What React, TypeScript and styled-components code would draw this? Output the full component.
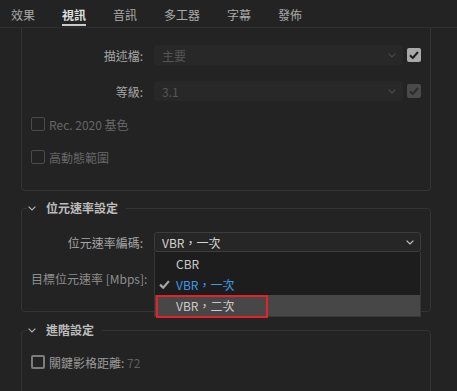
import React from "react";
import styled, { createGlobalStyle } from "styled-components";

const GlobalStyle = createGlobalStyle`
  html, body {
    margin: 0;
    padding: 0;
    height: 391px;
    overflow: hidden;
    background: #232323;
  }
  body {
    font-family: "Noto Sans CJK TC", "Noto Sans", sans-serif;
    font-size: 12px;
    color: #a8a8a8;
  }
`;

const tabs = ["效果", "視訊", "音訊", "多工器", "字幕", "發佈"];

function Chevron({ color }: { color: string }) {
  return (
    <svg width="8" height="5" viewBox="0 0 8 5">
      <polyline points="0.6,0.6 4,4 7.4,0.6" fill="none" stroke={color} strokeWidth="1.2" />
    </svg>
  );
}

function Tick({ color, size = 10 }: { color: string; size?: number }) {
  return (
    <svg width={size} height={size * 0.8} viewBox="0 0 10 8">
      <polyline points="1,4.2 3.8,7 9,1" fill="none" stroke={color} strokeWidth="2" />
    </svg>
  );
}

function App() {
  return (
    <>
      <GlobalStyle />
      <TabBar>
        {tabs.map((t) => (
          <Tab key={t} $active={t === "視訊"}>
            {t}
          </Tab>
        ))}
      </TabBar>

      <Content>
        <TopBox>
          <SelectStack>
            <FormRow>
              <Label>描述檔:</Label>
              <Select $disabled>
                <span>主要</span>
                <Chevron color="#4a4a4a" />
              </Select>
              <CheckBox $checked $tone="bright">
                <Tick color="#1f1f1f" />
              </CheckBox>
            </FormRow>
            <FormRow>
              <Label>等級:</Label>
              <Select $disabled>
                <span>3.1</span>
                <Chevron color="#4a4a4a" />
              </Select>
              <CheckBox $checked $tone="dim">
                <Tick color="#2b2b2b" />
              </CheckBox>
            </FormRow>
          </SelectStack>
          <CheckRow>
            <CheckBox />
            <CheckLabel>Rec. 2020 基色</CheckLabel>
          </CheckRow>
          <CheckRow>
            <CheckBox />
            <CheckLabel>高動態範圍</CheckLabel>
          </CheckRow>
        </TopBox>

        <Section>
          <Legend>
            <Chevron color="#b0b0b0" />
            <LegendText>位元速率設定</LegendText>
          </Legend>
          <SectionBody>
            <FormRow>
              <Label>位元速率編碼:</Label>
              <SelectWrap>
                <Select $open>
                  <span>VBR，一次</span>
                  <Chevron color="#c4c4c4" />
                </Select>
                <Menu>
                  <MenuItem>
                    <TickSlot />
                    CBR
                  </MenuItem>
                  <MenuItem $selected>
                    <TickSlot>
                      <Tick color="#a8a8a8" size={11} />
                    </TickSlot>
                    VBR，一次
                  </MenuItem>
                  <MenuItem $hover>
                    <TickSlot />
                    VBR，二次
                    <Annotation />
                  </MenuItem>
                </Menu>
              </SelectWrap>
            </FormRow>
            <FormRow>
              <Label $dim>目標位元速率 [Mbps]:</Label>
            </FormRow>
          </SectionBody>
        </Section>

        <Section $last>
          <Legend>
            <Chevron color="#b0b0b0" />
            <LegendText>進階設定</LegendText>
          </Legend>
          <SectionBody $last>
            <CheckRow>
              <CheckBox $tone="strong" />
              <CheckLabel $bright>
                關鍵影格距離: <Value>72</Value>
              </CheckLabel>
            </CheckRow>
          </SectionBody>
        </Section>
      </Content>
    </>
  );
}

const TabBar = styled.div`
  display: flex;
  align-items: flex-start;
  gap: 27px;
  height: 27px;
  padding-left: 11px;
  border-bottom: 1px solid #2e2e2e;
`;

const Tab = styled.div<{ $active?: boolean }>`
  box-sizing: border-box;
  height: 26px;
  padding-top: 5px;
  display: flex;
  align-items: center;
  font-size: 12px;
  color: ${(p) => (p.$active ? "#e0e0e0" : "#a9a9a9")};
  font-weight: ${(p) => (p.$active ? 700 : 400)};
  border-bottom: 2px solid ${(p) => (p.$active ? "#c9c9c9" : "transparent")};
`;

const Content = styled.div`
  padding: 0 26px 0 21px;
`;

const TopBox = styled.div`
  display: flex;
  flex-direction: column;
  gap: 13px;
  padding: 17px 9px 23px;
  border: 1px solid #343434;
  border-top: none;
  border-radius: 0 0 4px 4px;
`;

const SelectStack = styled.div`
  display: flex;
  flex-direction: column;
  gap: 16px;
`;

const FormRow = styled.div`
  display: flex;
  align-items: center;
  height: 20px;
`;

const Label = styled.div<{ $dim?: boolean }>`
  width: 112px;
  margin-right: 11px;
  text-align: right;
  white-space: nowrap;
  color: ${(p) => (p.$dim ? "#8e8e8e" : "#a6a6a6")};
`;

const SelectWrap = styled.div`
  position: relative;
  flex: 1;
  height: 20px;
`;

const Select = styled.div<{ $disabled?: boolean; $open?: boolean }>`
  box-sizing: border-box;
  flex: 1;
  height: 20px;
  display: flex;
  align-items: center;
  justify-content: space-between;
  padding: 0 6px 0 7px;
  border-radius: 3px;
  background: ${(p) => (p.$disabled ? "#282828" : "#262626")};
  border: 1px solid ${(p) => (p.$open ? "#3c3c3c" : "transparent")};
  color: ${(p) => (p.$disabled ? "#565656" : "#d4d4d4")};
`;

const CheckBox = styled.div<{ $checked?: boolean; $tone?: "bright" | "dim" | "strong" }>`
  box-sizing: border-box;
  width: 14px;
  height: 14px;
  flex-shrink: 0;
  margin-left: 4px;
  border-radius: 2px;
  display: flex;
  align-items: center;
  justify-content: center;
  background: ${(p) =>
    p.$checked ? (p.$tone === "bright" ? "#a9a9a9" : "#4a4a4a") : "transparent"};
  border: ${(p) =>
    p.$checked
      ? "none"
      : p.$tone === "strong"
      ? "2px solid #7c7c7c"
      : "1.5px solid #4c4c4c"};
`;

const CheckRow = styled.div`
  display: flex;
  align-items: center;
  height: 20px;
  gap: 4px;
  & > ${CheckBox} {
    margin-left: 0;
  }
`;

const CheckLabel = styled.span<{ $bright?: boolean }>`
  color: ${(p) => (p.$bright ? "#9a9a9a" : "#676767")};
  white-space: nowrap;
`;

const Value = styled.span`
  color: #5e5e5e;
`;

const Section = styled.fieldset<{ $last?: boolean }>`
  margin: ${(p) => (p.$last ? "10px" : "9px")} 0 0;
  padding: 0 9px;
  min-width: 0;
  border: 1px solid #343434;
  border-radius: 4px;
`;

const Legend = styled.legend`
  display: flex;
  align-items: center;
  gap: 10px;
  height: 16px;
  margin-left: -4px;
  padding: 0 8px 0 1px;
`;

const LegendText = styled.span`
  font-weight: 700;
  color: #bdbdbd;
  line-height: 16px;
`;

const SectionBody = styled.div<{ $last?: boolean }>`
  display: flex;
  flex-direction: column;
  gap: 16px;
  padding: ${(p) => (p.$last ? "14px 0 24px" : "16px 0 23px")};
`;

const Menu = styled.div`
  position: absolute;
  z-index: 2;
  top: 20px;
  left: 0;
  right: 0;
  padding-top: 1px;
  background: #1d1d1d;
  border: 1px solid #383838;
  border-top: none;
`;

const MenuItem = styled.div<{ $selected?: boolean; $hover?: boolean }>`
  position: relative;
  display: flex;
  align-items: center;
  gap: 6px;
  height: 21px;
  padding-left: 4px;
  background: ${(p) => (p.$hover ? "#474747" : "transparent")};
  color: ${(p) => (p.$selected ? "#3d9be6" : "#cccccc")};
`;

const TickSlot = styled.span`
  width: 11px;
  display: flex;
  align-items: center;
`;

const Annotation = styled.span`
  position: absolute;
  box-sizing: border-box;
  left: 1px;
  top: 0;
  width: 112px;
  height: 23px;
  border: 2px solid #e3222b;
`;

export default App;
